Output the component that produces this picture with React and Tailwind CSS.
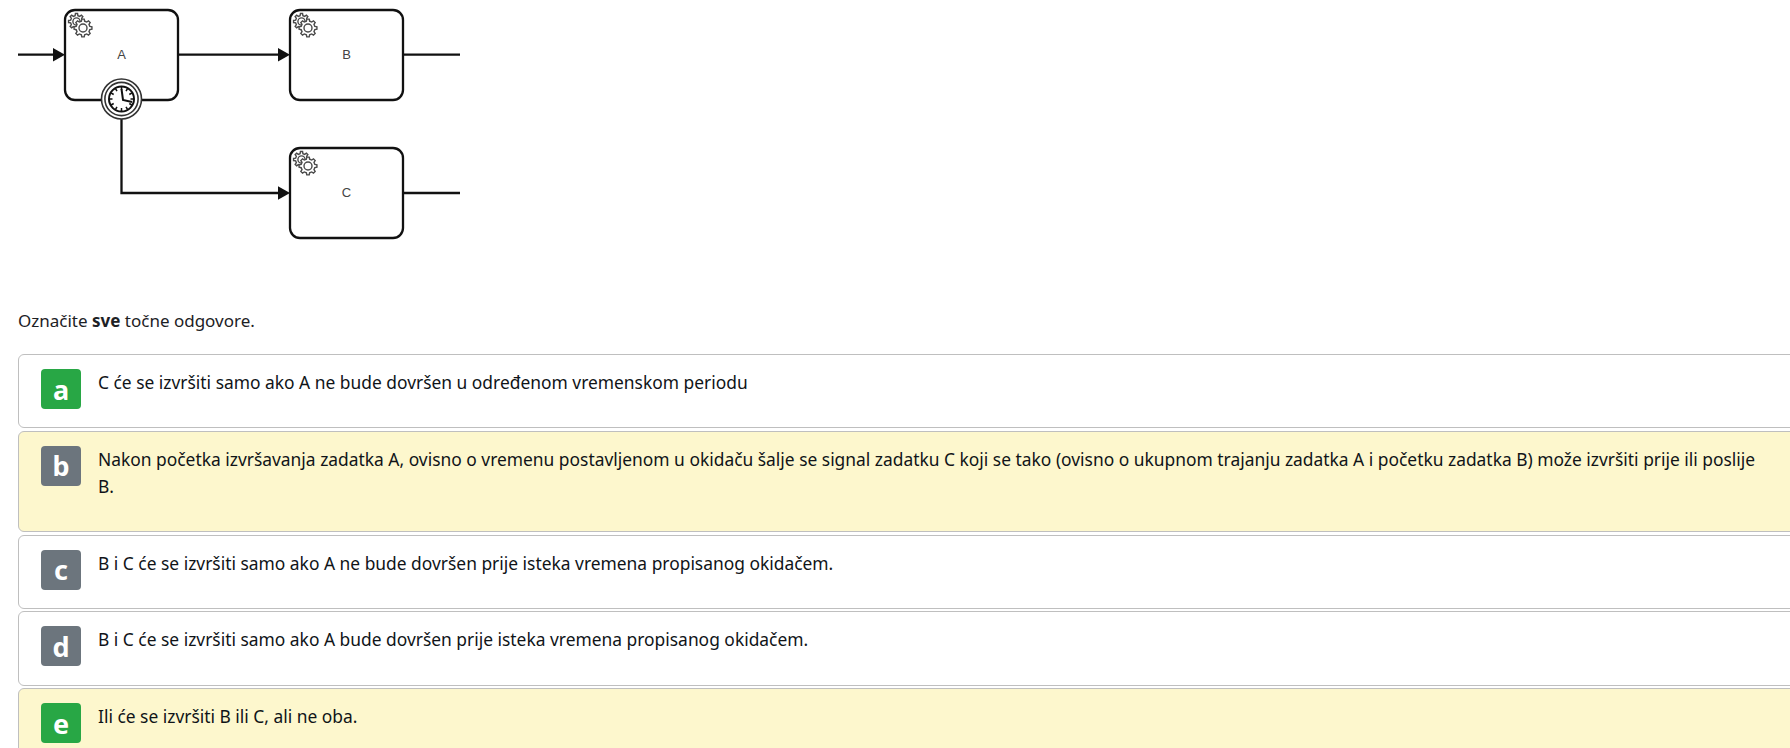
const gearPath = (cx, cy, teeth, ro, ri) => {
  const pts = [];
  const step = (Math.PI * 2) / teeth;
  for (let i = 0; i < teeth; i++) {
    const a = i * step;
    [[-0.3, ri], [-0.17, ro], [0.17, ro], [0.3, ri]].forEach(([f, r]) => {
      const t = a + f * step;
      pts.push(`${(cx + r * Math.cos(t)).toFixed(2)},${(cy + r * Math.sin(t)).toFixed(2)}`);
    });
  }
  return `M${pts.join("L")}Z`;
};

function Gears({ x, y }) {
  return (
    <g transform={`translate(${x} ${y})`} fill="none" stroke="#4a4a4a" strokeWidth="1.4">
      <path d={gearPath(8, 8, 8, 8, 6)} fill="#fff" />
      <circle cx="8" cy="8" r="3.6" />
      <path d={gearPath(14.5, 14.5, 8, 9, 7)} fill="#fff" />
      <circle cx="14.5" cy="14.5" r="4" />
    </g>
  );
}

function Box({ x, y, label }) {
  return (
    <g>
      <rect x={x} y={y} width="113" height="90" rx="10" fill="#fff" stroke="#111" strokeWidth="2.3" />
      <Gears x={x + 3.5} y={y + 3.5} />
      <text
        x={x + 56.5}
        y={y + 49}
        textAnchor="middle"
        fontSize="13"
        fill="#444"
        fontFamily="'Liberation Sans', sans-serif"
      >
        {label}
      </text>
    </g>
  );
}

function Diagram() {
  const ticks = Array.from({ length: 12 }, (_, i) => {
    const t = (i * Math.PI) / 6;
    return (
      <line
        key={i}
        x1={121.5 + 9 * Math.cos(t)}
        y1={99 + 9 * Math.sin(t)}
        x2={121.5 + 12 * Math.cos(t)}
        y2={99 + 12 * Math.sin(t)}
        stroke="#111"
        strokeWidth="1.5"
      />
    );
  });
  return (
    <svg width="480" height="309" className="block" viewBox="0 0 480 309">
      <g stroke="#111" strokeWidth="2.3" fill="none">
        <path d="M18 54.7H56" />
        <path d="M178 54.7H282" />
        <path d="M403 54.7H460" />
        <path d="M403 193H460" />
        <path d="M121.5 118V193H282" />
      </g>
      <g fill="#111">
        <path d="M53 48L65 54.7L53 61.4Z" />
        <path d="M278 48L290 54.7L278 61.4Z" />
        <path d="M278 186.3L290 193L278 199.7Z" />
      </g>
      <Box x={65} y={10} label="A" />
      <Box x={290} y={10} label="B" />
      <Box x={290} y={148} label="C" />
      <circle cx="121.5" cy="99" r="20" fill="#fff" stroke="#333" strokeWidth="1.6" />
      <circle cx="121.5" cy="99" r="16.6" fill="#fff" stroke="#333" strokeWidth="1.6" />
      <circle cx="121.5" cy="99" r="12.5" fill="#fff" stroke="#111" strokeWidth="2" />
      {ticks}
      <path d="M121.5 89L123 100L132 102" fill="none" stroke="#111" strokeWidth="2" />
    </svg>
  );
}

const answers = [
  { l: "a", t: "C će se izvršiti samo ako A ne bude dovršen u određenom vremenskom periodu", ok: true, sel: false },
  {
    l: "b",
    t: "Nakon početka izvršavanja zadatka A, ovisno o vremenu postavljenom u okidaču šalje se signal zadatku C koji se tako (ovisno o ukupnom trajanju zadatka A i početku zadatka B) može izvršiti prije ili poslije B.",
    ok: false,
    sel: true,
  },
  { l: "c", t: "B i C će se izvršiti samo ako A ne bude dovršen prije isteka vremena propisanog okidačem.", ok: false, sel: false },
  { l: "d", t: "B i C će se izvršiti samo ako A bude dovršen prije isteka vremena propisanog okidačem.", ok: false, sel: false },
  { l: "e", t: "Ili će se izvršiti B ili C, ali ne oba.", ok: true, sel: true },
];

export default function App() {
  return (
    <div className="h-[748px] overflow-hidden bg-white text-[#1d2125] font-['Noto_Sans','Open_Sans',sans-serif]">
      <Diagram />
      <p className="ml-[18px] text-[17px] leading-6">
        Označite <b className="font-bold">sve</b> točne odgovore.
      </p>
      <div className="ml-[18px] mt-[21px] flex w-[1790px] flex-col gap-[2.4px]">
        {answers.map((a) => (
          <div
            key={a.l}
            className={`flex gap-[17px] rounded-[6px] border border-[#bfbfbf] pt-[14px] pl-[22px] ${
              a.sel ? "bg-[#fdf7cd]" : "bg-white"
            }`}
          >
            <div
              className={`flex h-10 w-10 shrink-0 items-center justify-center rounded-[4px] text-[27px] leading-none font-bold text-white ${
                a.ok ? "bg-[#28a745]" : "bg-[#6c757d]"
              }`}
            >
              {a.l}
            </div>
            <div className="w-[1672px] pb-[31px] text-[17.4px] leading-[27.3px] text-[#101418]">{a.t}</div>
          </div>
        ))}
      </div>
    </div>
  );
}
